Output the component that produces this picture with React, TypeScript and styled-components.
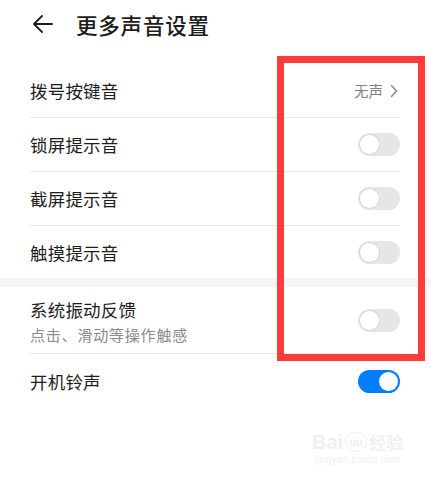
import styled, { createGlobalStyle } from 'styled-components';

const GlobalStyle = createGlobalStyle`
  html, body {
    margin: 0;
    padding: 0;
    background: #ffffff;
  }
  body {
    font-family: 'Noto Sans CJK SC', 'Noto Sans', sans-serif;
    color: #1a1a1a;
  }
  * {
    box-sizing: border-box;
  }
`;

const Page = styled.div`
  position: relative;
  width: 431px;
  height: 486px;
  overflow: hidden;
  background: #fff;
`;

const Header = styled.div`
  height: 64px;
  display: flex;
  align-items: center;
  padding: 0 0 16px 32px;
  gap: 23px;
`;

const Title = styled.h1`
  margin: 0;
  font-size: 21.5px;
  font-weight: 500;
  color: #1c1c1c;
  letter-spacing: 0.8px;
`;

const Group = styled.div`
  padding: 0 31px 0 30px;
`;

const GroupGap = styled.div`
  height: 9px;
  background: #f5f5f5;
`;

interface RowProps {
  divider?: boolean;
  height?: number;
}

const Row = styled.div<RowProps>`
  display: flex;
  align-items: center;
  justify-content: space-between;
  min-height: ${(p) => p.height ?? 54}px;
  border-bottom: ${(p) => (p.divider ? '1px solid #e9e9e9' : 'none')};
`;

const Texts = styled.div`
  display: flex;
  flex-direction: column;
  gap: 2px;
  padding-top: 2px;
`;

const Label = styled.span`
  font-size: 17.5px;
  color: #1e1e1e;
  letter-spacing: 0.2px;
`;

const Sub = styled.span`
  font-size: 15px;
  color: #8a8a8a;
  letter-spacing: 0.8px;
`;

const Value = styled.span`
  display: flex;
  align-items: center;
  gap: 7px;
  font-size: 14.5px;
  color: #808080;
  padding-right: 2px;
`;

interface SwitchProps {
  on?: boolean;
}

const Switch = styled.span<SwitchProps>`
  position: relative;
  display: inline-block;
  width: 42px;
  height: 23px;
  border-radius: 12px;
  background: ${(p) => (p.on ? '#007dff' : '#e6e6e6')};
`;

const Knob = styled.span<SwitchProps>`
  position: absolute;
  top: 2px;
  left: ${(p) => (p.on ? '21px' : '2px')};
  width: 19px;
  height: 19px;
  border-radius: 50%;
  background: #fff;
  box-shadow: ${(p) => (p.on ? 'none' : '0 0 0 1px #d8d8d8')};
`;

const Highlight = styled.div`
  position: absolute;
  left: 277px;
  top: 56px;
  width: 148px;
  height: 305px;
  border: 7px solid #ff3b3b;
`;

const Watermark = styled.div`
  position: absolute;
  left: 312px;
  top: 430px;
  display: flex;
  flex-direction: column;
  align-items: center;
  color: #f0f0f0;
  font-family: 'Liberation Sans', Arial, sans-serif;
  pointer-events: none;
`;

const Brand = styled.div`
  display: flex;
  align-items: center;
  gap: 2px;
  font-size: 20px;
  font-weight: 700;
  line-height: 24px;
`;

const Paw = styled.span`
  display: inline-flex;
  align-items: center;
  justify-content: center;
  width: 22px;
  height: 20px;
  border: 1.5px solid #f0f0f0;
  border-radius: 10px;
  font-size: 11px;
`;

const BrandCn = styled.span`
  font-family: 'Noto Sans CJK SC', sans-serif;
  font-size: 17px;
`;

const Site = styled.div`
  font-size: 10px;
  line-height: 12px;
  letter-spacing: 0.3px;
`;

const BackArrow = () => (
  <svg width="21" height="20" viewBox="0 0 21 20" fill="none">
    <path d="M20 10H2M10 2L2 10l8 8" stroke="#1c1c1c" strokeWidth="1.8" strokeLinecap="round" strokeLinejoin="round" />
  </svg>
);

const Chevron = () => (
  <svg width="8" height="14" viewBox="0 0 8 14" fill="none">
    <path d="M1.5 1.5L6.5 7l-5 5.5" stroke="#8c8c8c" strokeWidth="1.5" strokeLinecap="round" strokeLinejoin="round" />
  </svg>
);

const Toggle = ({ on }: SwitchProps) => (
  <Switch on={on}>
    <Knob on={on} />
  </Switch>
);

const App = () => {
  return (
    <Page>
      <GlobalStyle />
      <Header>
        <BackArrow />
        <Title>更多声音设置</Title>
      </Header>
      <Group>
        <Row divider>
          <Label>拨号按键音</Label>
          <Value>
            无声
            <Chevron />
          </Value>
        </Row>
        <Row divider>
          <Label>锁屏提示音</Label>
          <Toggle />
        </Row>
        <Row divider>
          <Label>截屏提示音</Label>
          <Toggle />
        </Row>
        <Row height={52}>
          <Label>触摸提示音</Label>
          <Toggle />
        </Row>
      </Group>
      <GroupGap />
      <Group>
        <Row divider height={67}>
          <Texts>
            <Label>系统振动反馈</Label>
            <Sub>点击、滑动等操作触感</Sub>
          </Texts>
          <Toggle />
        </Row>
        <Row>
          <Label>开机铃声</Label>
          <Toggle on />
        </Row>
      </Group>
      <Highlight />
      <Watermark>
        <Brand>
          Bai<Paw>du</Paw>
          <BrandCn>经验</BrandCn>
        </Brand>
        <Site>jingyan.baidu.com</Site>
      </Watermark>
    </Page>
  );
};

export default App;
